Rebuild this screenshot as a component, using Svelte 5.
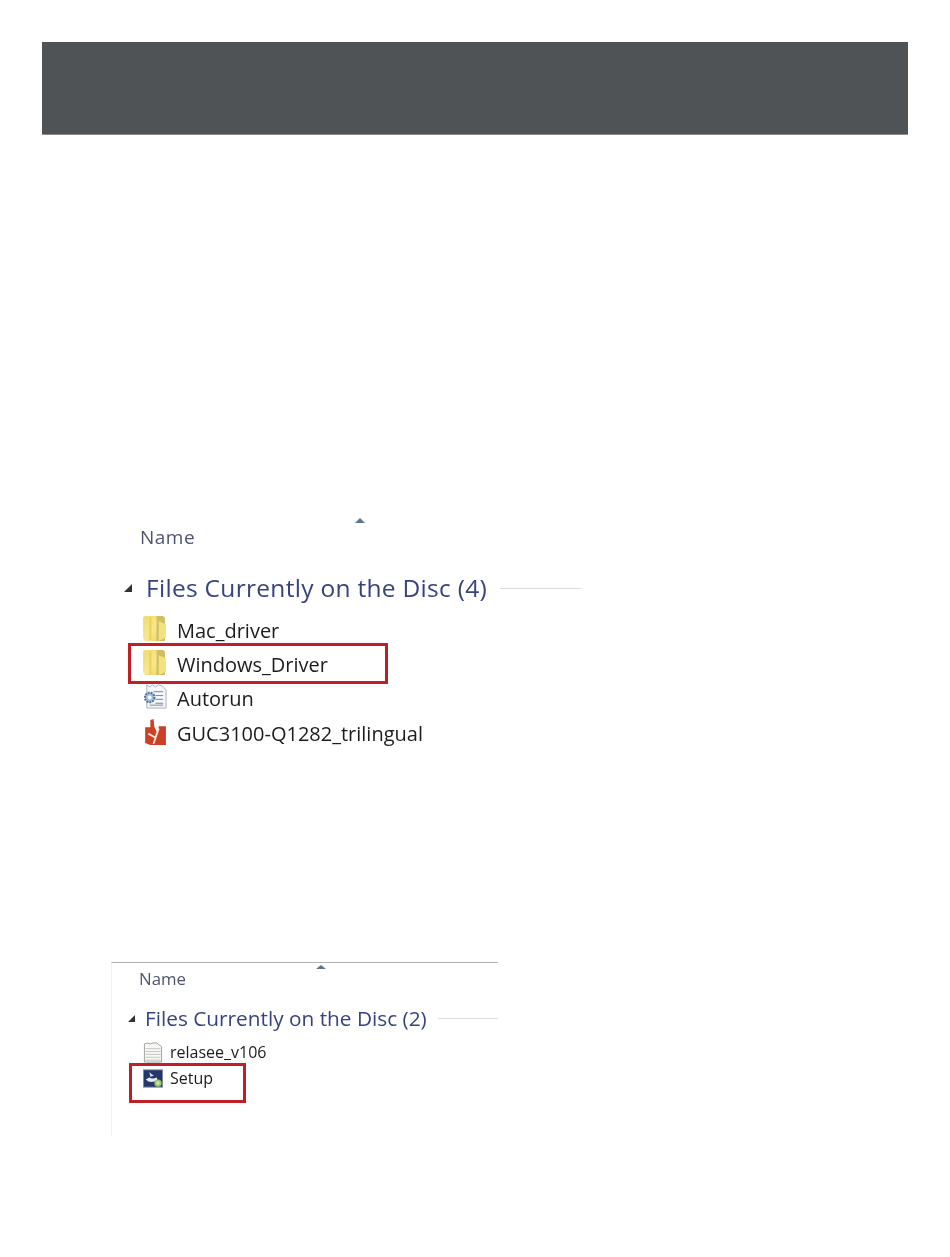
<script>
	const firstFiles = [
		{ name: 'Mac_driver', icon: 'folder' },
		{ name: 'Windows_Driver', icon: 'folder', marked: true },
		{ name: 'Autorun', icon: 'config' },
		{ name: 'GUC3100-Q1282_trilingual', icon: 'pdf' }
	];

	const secondFiles = [
		{ name: 'relasee_v106', icon: 'text' },
		{ name: 'Setup', icon: 'setup', marked: true }
	];
</script>

{#snippet icon(kind)}
	{#if kind === 'folder'}
		<svg viewBox="0 0 24 26" class="icon">
			<defs>
				<linearGradient id="fold" x1="0" x2="1" y1="0" y2="1">
					<stop offset="0" stop-color="#f0da68" />
					<stop offset="0.5" stop-color="#f7e88e" />
					<stop offset="1" stop-color="#eccf4e" />
				</linearGradient>
			</defs>
			<path d="M1 3 Q1 1 3 1 H20 Q22 1 22 3 V24 Q22 25 20 25 H4 Q1 25 1 21 Z" fill="url(#fold)" />
			<path d="M14 1 H20 L22 3 V25 H14 Z" fill="#cfbd68" />
			<path d="M16 6 L23 9 V22 L16 25 Z" fill="#f3e07e" />
			<path d="M8 2 V24" stroke="#ead25c" stroke-width="2" />
		</svg>
	{:else if kind === 'config'}
		<svg viewBox="0 0 26 26" class="icon">
			<path d="M5 1 L8 3 L11 1 L14 3 L17 1 L21 2 L25 6 V25 H5 Z" fill="#f4f6fa" stroke="#a3aebe" />
			<path d="M12 8 H22 M14 12 H22 M14 16 H22 M14 20 H22 M8 22 H22" stroke="#75859c" />
			<circle cx="8" cy="14" r="5" fill="#9fbcdc" stroke="#4f7198" stroke-width="2" stroke-dasharray="2 1" />
			<circle cx="8" cy="14" r="2" fill="#fff" />
		</svg>
	{:else if kind === 'pdf'}
		<svg viewBox="0 0 24 26" class="icon">
			<path d="M3 9 H8 L8 2 L11 1 L12 9 L14 13 L16 12 V8 H23 V26 H8 L3 24 Z" fill="#cc4125" />
			<path d="M6 15 L13 19 L16 10 M13 19 L11 25" stroke="#f7e4dc" stroke-width="1.8" fill="none" />
		</svg>
	{:else if kind === 'text'}
		<svg viewBox="0 0 20 22" class="icon">
			<path d="M1 2 L4 1 L7 2 L10 1 L14 1 L19 5 V21 H1 Z" fill="#f8f8f6" stroke="#a0a09c" />
			<path d="M2 7 H18 M2 10 H18 M2 13 H18 M2 16 H18 M2 19 H18" stroke="#c4c4c0" />
		</svg>
	{:else}
		<svg viewBox="0 0 22 20" class="icon">
			<rect x="0.5" y="0.5" width="21" height="19" fill="#24376b" stroke="#7d8aa8" />
			<path d="M3 11 Q8 16 16 12 L15 9 Q10 11 7 9 Z" fill="#e6ecf5" />
			<path d="M7 3 L12 7 L8 8 Z" fill="#cfd9ea" />
			<circle cx="16.5" cy="15" r="4" fill="#9fc75b" />
			<path d="M14.5 15 H18.5 M16.5 13 V17" stroke="#e6f2c9" />
		</svg>
	{/if}
{/snippet}

{#snippet listing(files, count)}
	<div class="name">Name</div>
	<div class="group">
		<span class="arrow"></span>
		<span class="group-title">Files Currently on the Disc ({count})</span>
		<span class="rule"></span>
	</div>
	<ul>
		{#each files as file}
			<li class:marked={file.marked}>
				{@render icon(file.icon)}
				<span>{file.name}</span>
			</li>
		{/each}
	</ul>
{/snippet}

<main>
	<header></header>

	<section class="shot first">
		<span class="sort"></span>
		{@render listing(firstFiles, 4)}
	</section>

	<section class="shot second">
		<span class="sort"></span>
		{@render listing(secondFiles, 2)}
	</section>
</main>

<style>
	:global(body) {
		background: #fff;
	}

	main {
		height: 1257px;
		padding: 42px 42px 0;
		box-sizing: border-box;
		font-family: 'Open Sans', 'Noto Sans', sans-serif;
		color: #1c1c1c;
	}

	header {
		height: 92px;
		background: #505356;
		border-bottom: 1px solid #8a8c8e;
	}

	.shot {
		position: relative;
		filter: blur(0.4px);
	}

	.sort {
		position: absolute;
		width: 0;
		height: 0;
		border-left: 5px solid transparent;
		border-right: 5px solid transparent;
		border-bottom: 5px solid #5d7688;
	}

	.name {
		color: #4f5470;
	}

	.group {
		display: flex;
		align-items: center;
	}

	.arrow {
		width: 0;
		height: 0;
		border-style: solid;
		border-color: transparent transparent #333 transparent;
	}

	.group-title {
		color: #37437f;
		white-space: nowrap;
	}

	.rule {
		height: 1px;
		background: #d9dbe0;
	}

	ul {
		list-style: none;
		margin: 0;
		padding: 0;
	}

	li {
		position: relative;
		display: flex;
		align-items: center;
		white-space: nowrap;
	}

	li.marked::after {
		content: '';
		position: absolute;
		border: 3px solid #bf2026;
		box-sizing: border-box;
	}

	.icon {
		flex: none;
		display: block;
	}

	.first {
		margin: 382px 0 0 80px;
		width: 460px;
		height: 242px;
	}

	.first .sort {
		left: 233px;
		top: 1px;
	}

	.first .name {
		padding: 8px 0 0 18px;
		font-size: 19px;
		line-height: 24px;
		letter-spacing: 0.5px;
	}

	.first .group {
		margin-top: 26px;
		font-size: 24.5px;
		line-height: 26px;
		letter-spacing: 0.3px;
	}

	.first .arrow {
		margin: 0 14px 0 2px;
		border-width: 0 0 8px 8px;
	}

	.first .rule {
		width: 81px;
		margin-left: 13px;
	}

	.first ul {
		margin: 12px 0 0 20px;
	}

	.first li {
		height: 34.3px;
		gap: 10px;
		font-size: 20px;
	}

	.first li .icon {
		width: 25px;
		height: 27px;
		margin-bottom: 4px;
	}

	.first li.marked::after {
		left: -14px;
		top: -4px;
		width: 260px;
		height: 41px;
	}

	.second {
		margin: 203px 0 0 69px;
		width: 387px;
		height: 174px;
		border-top: 1px solid #b0b0b0;
		border-left: 1px solid #f0f0f0;
		box-sizing: border-box;
	}

	.second .sort {
		left: 204px;
		top: 2px;
		border-bottom-width: 4px;
	}

	.second .name {
		padding: 6px 0 0 27px;
		font-size: 16.8px;
		line-height: 20px;
	}

	.second .group {
		margin-top: 17px;
		margin-left: 16px;
		font-size: 20.8px;
		line-height: 24px;
	}

	.second .arrow {
		margin-right: 10px;
		border-width: 0 0 7px 7px;
	}

	.second .rule {
		flex: 1;
		margin-left: 11px;
	}

	.second ul {
		margin: 9px 0 0 31px;
	}

	.second li {
		height: 26px;
		gap: 7px;
		font-size: 16px;
	}

	.second li .icon {
		width: 20px;
		height: 21px;
	}

	.second li.marked::after {
		left: -14px;
		top: -2px;
		width: 117px;
		height: 40px;
	}
</style>
